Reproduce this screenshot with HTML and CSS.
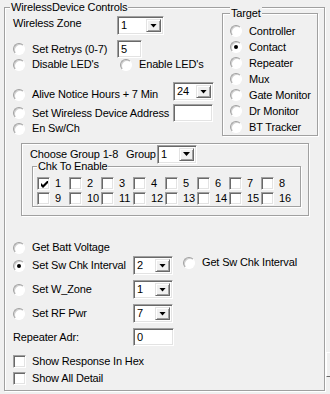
FILE: index.html
```html
<!DOCTYPE html>
<html lang="en">
<head>
    <meta charset="UTF-8">
    <meta name="viewport" content="width=device-width, initial-scale=1.0">
    <link rel="stylesheet" href="styles.css">
    <title>WirelessDevice Controls</title>
</head>
<body>

<div class="group main">
    <span class="caption">WirelessDevice Controls</span>

    <div class="top">
        <div class="left-col">
            <div class="row r-zone">
                <span class="lbl w104 zone-lbl">Wireless Zone</span>
                <div class="combo w47"><span class="val">1</span><span class="btn"></span></div>
            </div>
            <div class="row r-retry">
                <label class="opt w104"><span class="radio"></span>Set Retrys (0-7)</label>
                <div class="text w25">5</div>
            </div>
            <div class="row r-led">
                <label class="opt w107"><span class="radio"></span>Disable LED's</label>
                <label class="opt"><span class="radio"></span>Enable LED's</label>
            </div>
            <div class="row r-alive">
                <label class="opt w160"><span class="radio"></span>Alive Notice Hours + 7 Min</label>
                <div class="combo w41"><span class="val">24</span><span class="btn"></span></div>
            </div>
            <div class="row r-addr">
                <label class="opt w160"><span class="radio"></span>Set Wireless Device Address</label>
                <div class="text w40"></div>
            </div>
            <div class="row r-ensw">
                <label class="opt"><span class="radio"></span>En Sw/Ch</label>
            </div>
        </div>

        <div class="group target">
            <span class="caption">Target</span>
            <label class="opt trow"><span class="radio"></span>Controller</label>
            <label class="opt trow"><span class="radio on"></span>Contact</label>
            <label class="opt trow"><span class="radio"></span>Repeater</label>
            <label class="opt trow"><span class="radio"></span>Mux</label>
            <label class="opt trow"><span class="radio"></span>Gate Monitor</label>
            <label class="opt trow"><span class="radio"></span>Dr Monitor</label>
            <label class="opt trow"><span class="radio"></span>BT Tracker</label>
        </div>
    </div>

    <div class="group choose">
        <div class="row choose-head">
            <span class="lbl w96">Choose Group 1-8</span>
            <span class="lbl w31">Group</span>
            <div class="combo w40"><span class="val">1</span><span class="btn"></span></div>
        </div>
        <div class="group chk-group">
            <span class="caption">Chk To Enable</span>
            <div class="chk-grid">
                <label class="cell"><span class="check on"><svg width="7" height="7" viewBox="0 0 7 7"><polygon points="0,2 2,4 7,-1 7,2 2,7 0,5" fill="#000"/></svg></span>1</label>
                <label class="cell"><span class="check"></span>2</label>
                <label class="cell"><span class="check"></span>3</label>
                <label class="cell"><span class="check"></span>4</label>
                <label class="cell"><span class="check"></span>5</label>
                <label class="cell"><span class="check"></span>6</label>
                <label class="cell"><span class="check"></span>7</label>
                <label class="cell"><span class="check"></span>8</label>
                <label class="cell"><span class="check"></span>9</label>
                <label class="cell"><span class="check"></span>10</label>
                <label class="cell"><span class="check"></span>11</label>
                <label class="cell"><span class="check"></span>12</label>
                <label class="cell"><span class="check"></span>13</label>
                <label class="cell"><span class="check"></span>14</label>
                <label class="cell"><span class="check"></span>15</label>
                <label class="cell"><span class="check"></span>16</label>
            </div>
        </div>
    </div>

    <div class="row r-batt">
        <label class="opt"><span class="radio"></span>Get Batt Voltage</label>
    </div>
    <div class="row r-swchk">
        <label class="opt w120"><span class="radio on"></span>Set Sw Chk Interval</label>
        <div class="combo w40"><span class="val">2</span><span class="btn"></span></div>
        <label class="opt get-sw"><span class="radio"></span>Get Sw Chk Interval</label>
    </div>
    <div class="row r-wzone">
        <label class="opt w120"><span class="radio"></span>Set W_Zone</label>
        <div class="combo w40"><span class="val">1</span><span class="btn"></span></div>
    </div>
    <div class="row r-rf">
        <label class="opt w120"><span class="radio"></span>Set RF Pwr</label>
        <div class="combo w40"><span class="val">7</span><span class="btn"></span></div>
    </div>
    <div class="row r-rep">
        <span class="lbl w120">Repeater Adr:</span>
        <div class="text w41">0</div>
    </div>
    <div class="row r-hex">
        <label class="opt"><span class="check box-gap"></span>Show Response In Hex</label>
    </div>
    <div class="row r-all">
        <label class="opt"><span class="check box-gap"></span>Show All Detail</label>
    </div>
</div>

<div class="side">
    <div class="side-btn"></div>
</div>

</body>
</html>
```

FILE: styles.css
```css
body {
    margin: 0;
    width: 330px;
    height: 394px;
    overflow: hidden;
    background-color: #f0f0f0;
    font-family: "Liberation Sans", Arial, sans-serif;
    font-size: 11px;
    line-height: 13px;
    letter-spacing: -0.15px;
    color: #000;
    display: flex;
    align-items: flex-start;
}

/* group boxes (etched frame) */
.group {
    position: relative;
    box-sizing: border-box;
    border: 1px solid #a0a0a0;
    box-shadow: inset 1px 1px 0 #fff, 1px 1px 0 #fff;
}

.caption {
    position: absolute;
    top: -7px;
    left: 5px;
    padding: 0 1px;
    background-color: #f0f0f0;
    white-space: nowrap;
}

.main {
    margin: 7px 0 0 4px;
    width: 321px;
    height: 384px;
    padding-left: 8px;
    flex: none;
}

.top {
    display: flex;
    align-items: flex-start;
}

.left-col {
    width: 209px;
    margin-top: 8px;
}

.row {
    display: flex;
    align-items: center;
}

.lbl, .opt {
    white-space: nowrap;
    flex: none;
}

.opt {
    display: flex;
    align-items: center;
}

.w25 { width: 25px; }
.w31 { width: 31px; }
.w40 { width: 40px; }
.w41 { width: 41px; }
.w47 { width: 47px; }
.w96 { width: 96px; }
.w104 { width: 104px; }
.w107 { width: 107px; }
.w120 { width: 120px; }
.w160 { width: 160px; }

/* rows of the left column */
.r-zone { height: 19px; align-items: flex-start; }
.zone-lbl { margin-top: 1px; }
.r-retry { height: 18px; margin-top: 5px; }
.r-led { height: 13px; }
.r-alive { height: 19px; margin-top: 11px; align-items: flex-end; }
.r-addr { height: 18px; margin-top: 3px; }
.r-ensw { height: 13px; }

/* target box */
.target {
    width: 96px;
    height: 123px;
    margin-top: 5px;
    padding: 9px 0 0 7px;
}

.target .caption { left: 7px; }

.trow { height: 16px; }

/* choose group box */
.choose {
    width: 288px;
    height: 73px;
    margin: 7px 0 0 8px;
    padding: 1px 0 0 8px;
}

.choose-head { height: 18px; }

.chk-group {
    width: 269px;
    height: 41px;
    margin: 3px 0 0 2px;
    padding: 10px 0 0 4px;
}

.chk-group .caption { left: 4px; }

.chk-grid {
    display: grid;
    grid-template-columns: repeat(8, 32px);
    grid-auto-rows: 15px;
}

.cell {
    display: flex;
    align-items: flex-start;
    gap: 5px;
}

/* lower rows */
.r-batt { height: 13px; margin-top: 25px; }
.r-swchk { height: 19px; margin-top: 2px; }
.get-sw { margin-left: 10px; align-self: flex-start; height: 13px; }
.r-wzone { height: 19px; margin-top: 5px; }
.r-rf { height: 19px; margin-top: 5px; }
.r-rep { height: 18px; margin-top: 5px; }
.r-hex { height: 13px; margin-top: 9px; }
.r-all { height: 13px; margin-top: 4px; }

/* controls */
.radio {
    width: 12px;
    height: 12px;
    box-sizing: border-box;
    border-radius: 50%;
    background-color: #fff;
    border: 1px solid;
    border-color: #a0a0a0 #fff #fff #a0a0a0;
    box-shadow: inset 1px 1px 0 #cfcfcf;
    margin-right: 7px;
    flex: none;
    display: flex;
    align-items: center;
    justify-content: center;
}

.radio.on::after {
    content: "";
    width: 4px;
    height: 4px;
    border-radius: 50%;
    background-color: #000;
}

.check {
    width: 13px;
    height: 13px;
    box-sizing: border-box;
    background-color: #fff;
    border: 1px solid;
    border-color: #a0a0a0 #fff #fff #a0a0a0;
    box-shadow: inset 1px 1px 0 #696969, inset -1px -1px 0 #e3e3e3;
    flex: none;
    display: flex;
    align-items: center;
    justify-content: center;
}

.check svg { display: block; margin: 1px 0 0 1px; }

.box-gap { margin-right: 6px; }

.combo, .text {
    box-sizing: border-box;
    background-color: #fff;
    border: 1px solid;
    border-color: #a0a0a0 #fff #fff #a0a0a0;
    box-shadow: inset 1px 1px 0 #696969, inset -1px -1px 0 #e3e3e3;
    flex: none;
}

.combo {
    height: 19px;
    display: flex;
    padding: 2px;
}

.combo .val {
    flex: 1;
    padding-left: 1px;
}

.btn {
    width: 15px;
    box-sizing: border-box;
    background-color: #f0f0f0;
    border: 1px solid;
    border-color: #e3e3e3 #696969 #696969 #e3e3e3;
    box-shadow: inset 1px 1px 0 #fff, inset -1px -1px 0 #a0a0a0;
    display: flex;
    align-items: center;
    justify-content: center;
}

.btn::after {
    content: "";
    width: 7px;
    height: 4px;
    background-color: #000;
    clip-path: polygon(0 0, 100% 0, 50% 100%);
}

.text {
    height: 18px;
    padding: 2px 0 0 3px;
}

/* bit of the next panel that shows at the edge */
.side {
    margin-left: 1px;
    padding-top: 352px;
    flex: none;
}

.side-btn {
    width: 10px;
    height: 25px;
    box-sizing: border-box;
    border-left: 1px solid #fff;
    border-top: 1px solid #fff;
    border-bottom: 1px solid #696969;
}
```
